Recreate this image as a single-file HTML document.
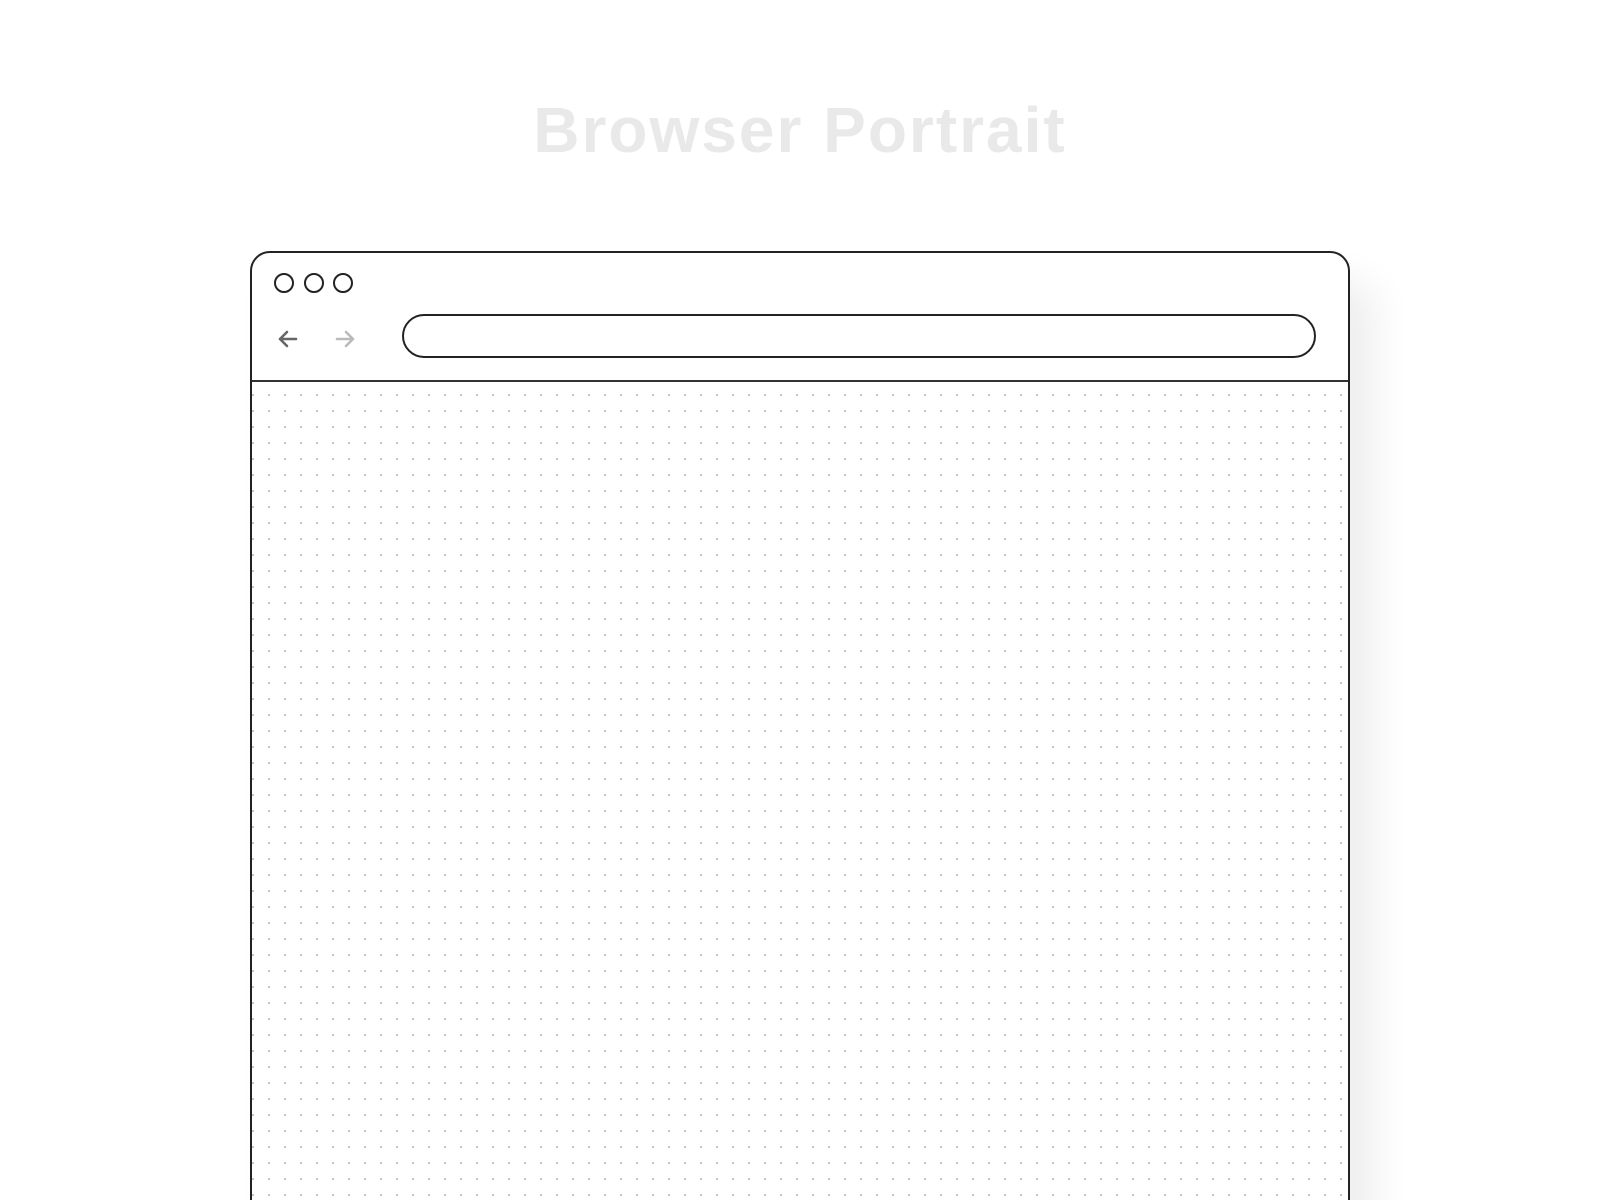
<!DOCTYPE html>
<html><head><meta charset="utf-8"><style>
html,body{margin:0;padding:0;background:#fff;width:1600px;height:1200px;overflow:hidden;position:relative;font-family:"Liberation Sans",sans-serif}
.t{position:absolute;left:0;top:92px;width:1600px;text-align:center;font-size:64px;font-weight:bold;color:#e9e9e9;white-space:nowrap;line-height:76px;letter-spacing:2px}
.w{position:absolute;left:250px;top:251px;width:1096px;height:1000px;border:2px solid #222;border-radius:20px 20px 0 0;background:#fff;box-shadow:24px 30px 40px rgba(0,0,0,0.07)}
.hd{position:absolute;left:0;top:0;right:0;height:127px;border-bottom:2px solid #333}
.dots{position:absolute;left:0;right:0;top:129px;bottom:0;background-image:radial-gradient(circle,#bbb 0.9px,transparent 1.2px);background-size:16px 16px;background-position:-7px 5px}
.c{position:absolute;top:20px;width:16px;height:16px;border:2px solid #222;border-radius:50%}
.ab{position:absolute;left:150px;top:61px;width:910px;height:40px;border:2px solid #222;border-radius:22px}
</style></head><body>
<div class="t">Browser Portrait</div>
<div class="w">
<div class="hd">
<div class="c" style="left:22px"></div><div class="c" style="left:52px"></div><div class="c" style="left:81px"></div>
<svg style="position:absolute;left:24px;top:74px" width="24" height="24" viewBox="0 0 24 24" fill="none" stroke="#666" stroke-width="2.6" stroke-linecap="round" stroke-linejoin="round"><path d="M20 12H4M11 5L4 12L11 19"/></svg>
<svg style="position:absolute;left:81px;top:74px" width="24" height="24" viewBox="0 0 24 24" fill="none" stroke="#bbb" stroke-width="2.6" stroke-linecap="round" stroke-linejoin="round"><path d="M4 12H20M13 5L20 12L13 19"/></svg>
<div class="ab"></div>
</div>
<div class="dots"></div>
</div>
</body></html>
